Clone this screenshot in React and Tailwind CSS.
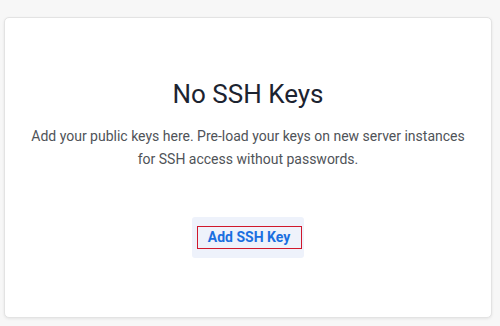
export default function App() {
  return (
    <div className="w-[500px] h-[326px] bg-[#f7f7f7] pt-[17px] pl-[4px] pr-[8px] pb-[8px]" style={{ fontFamily: "Roboto, 'Liberation Sans', sans-serif" }}>
      <div className="h-[301px] bg-white border border-[#e3e3e3] rounded-[5px] shadow-[0_1px_3px_rgba(0,0,0,0.08)] flex flex-col items-center">
        <h2 className="mt-[60px] text-[26px] leading-[32px] text-[#1c2330] font-normal">No SSH Keys</h2>
        <p className="mt-[15px] text-[14px] leading-[23px] text-[#4f5358] text-center">
          Add your public keys here. Pre-load your keys on new server instances
          <br />
          for SSH access without passwords.
        </p>
        <button className="mt-[46px] mr-[1px] w-[112px] h-[41px] bg-[#eef2fb] rounded-[3px] flex items-center justify-center">
          <span className="ml-[3px] w-[105px] h-[23px] border border-solid border-[#d0182c] flex items-center justify-center text-[14px] font-bold text-[#1a6fe0]">
            Add SSH Key
          </span>
        </button>
      </div>
    </div>
  );
}
